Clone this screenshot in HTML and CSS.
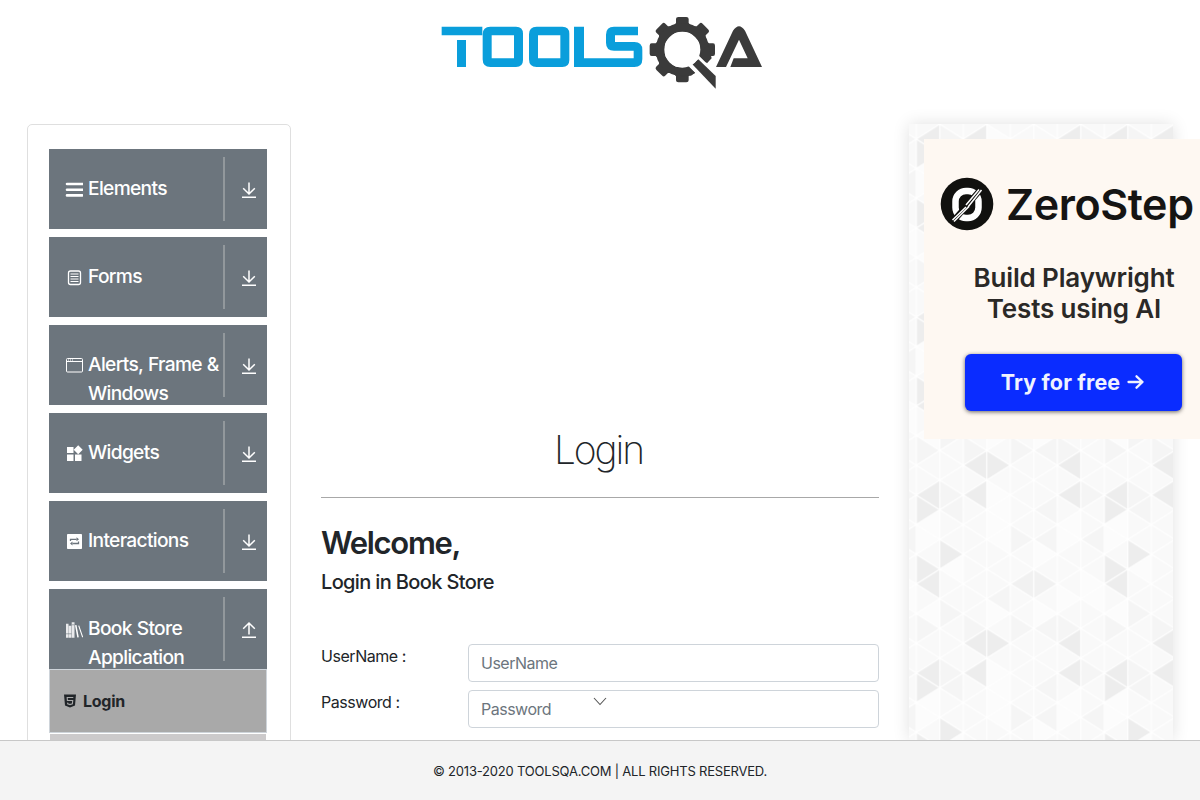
FILE: index.html
```html
<!DOCTYPE html>
<html lang="en">
<head>
<meta charset="utf-8">
<title>ToolsQA</title>
<link rel="stylesheet" href="styles.css">
</head>
<body>
<svg class="defs" width="0" height="0">
  <symbol id="down" viewBox="0 0 16 18"><path d="M8 1.500v11M2.200 7.200L8 13l5.800-5.800M1 16.200h14" fill="none" stroke="#fff" stroke-width="1.500"/></symbol>
  <symbol id="up" viewBox="0 0 16 18"><path d="M8 13.500v-11M2.200 7.800L8 2l5.800 5.800M1 16.200h14" fill="none" stroke="#fff" stroke-width="1.500"/></symbol>
</svg>
<header class="header">
  <svg class="logo" viewBox="0 0 1035 285" role="img" aria-label="ToolsQA">
    <g fill="#0a9edb" fill-rule="evenodd">
      <path d="M35 65H157V91H35ZM81 105H108V186H81Z"/>
      <path d="M181 65H258Q279 65 279 86V165Q279 186 258 186H181Q158 186 158 163V88Q158 65 181 65ZM185 91V160H252V91Z"/>
      <path d="M320 65H397Q418 65 418 86V165Q418 186 397 186H320Q297 186 297 163V88Q297 65 320 65ZM324 91V160H391V91Z"/>
      <path d="M432 65H462V160H611V137H552Q528 137 528 113V89Q528 65 552 65H624V91H555V111H613Q637 111 637 135V162Q637 186 613 186H432Z"/>
    </g>
    <g fill="#3b3b3b">
      <g>
        <path id="tooth" d="M727 66L738 54V42Q738 36 745 36H769Q776 36 776 42V54L787 66V82H727Z"/>
        <use href="#tooth" transform="rotate(45 757 134)"/>
        <use href="#tooth" transform="rotate(90 757 134)"/>
        <use href="#tooth" transform="rotate(180 757 134)"/>
        <use href="#tooth" transform="rotate(225 757 134)"/>
        <use href="#tooth" transform="rotate(270 757 134)"/>
        <use href="#tooth" transform="rotate(315 757 134)"/>
      </g>
      <circle cx="757" cy="134" r="67" fill="none" stroke="#3b3b3b" stroke-width="26"/>
      <path d="M803 148L870 215V270L765 177Z" fill="#fff"/>
      <path d="M803 148L831 175Q840 165 845 160L835 120ZM770 178L795 203L783 212H750V185Z"/>
      <path d="M787 178L805 163L857 213V251Z"/>
      <path d="M858 186L909 77Q927 50 945 77L996 186H901L911 160H953L927 104L888 186Z"/>
    </g>
    <circle cx="757" cy="134" r="54" fill="#fff"/>
  </svg>
</header>
<main class="layout">
  <nav class="sidebar">
    <div class="group"><div class="title"><svg class="icon" viewBox="0 0 18 18"><path d="M2 4h15.400M2 9.700h15.400M2 15.400h15.400" stroke="#fff" stroke-width="2.600" stroke-linecap="round"/></svg><span>Elements</span></div><div class="toggle"><svg><use href="#down"/></svg></div></div>
    <div class="group"><div class="title"><svg class="icon" viewBox="0 0 18 18"><rect x="3.500" y="3" width="12" height="13.500" rx="2" fill="none" stroke="#fff" stroke-width="1.300"/><path d="M5.500 6h8M5.500 8.500h8M5.500 11h8M5.500 13.500h8" stroke="#fff" stroke-width="1"/></svg><span>Forms</span></div><div class="toggle"><svg><use href="#down"/></svg></div></div>
    <div class="group"><div class="title"><svg class="icon" viewBox="0 0 18 18"><rect x="1.500" y="2.500" width="16" height="13.500" rx="1" fill="none" stroke="#fff"/><path d="M1.500 5.500h16M3 4h1M5 4h1M7 4h1" stroke="#fff"/></svg><span>Alerts, Frame &amp; Windows</span></div><div class="toggle"><svg><use href="#down"/></svg></div></div>
    <div class="group"><div class="title"><svg class="icon" viewBox="0 0 18 18"><path d="M2 3h6.500v6H2zM2 10.500h6.500v6.500H2zM10 10.500h6.500v6.500h-6.500zM13.200 1.200L17.700 5.700 13.200 10.200 8.700 5.700z" fill="#fff"/></svg><span>Widgets</span></div><div class="toggle"><svg><use href="#down"/></svg></div></div>
    <div class="group"><div class="title"><svg class="icon" viewBox="0 0 18 18"><rect x="2" y="2" width="15" height="15" rx=".8" fill="#fff"/><path d="M5.500 9V7.300h6M13.500 9.500v2h-6" fill="none" stroke="#6c757d" stroke-width="1.300"/><path d="M11.500 5.200L14 7.300 11.500 9.300zM7.500 9.500L5 11.500 7.500 13.600z" fill="#6c757d"/></svg><span>Interactions</span></div><div class="toggle"><svg><use href="#down"/></svg></div></div>
    <div class="group open"><div class="title"><svg class="icon" viewBox="0 0 18 18"><g transform="translate(0 .8)"><path d="M1 3h2.500v14H1zM3.800 5h2.500v12H3.800zM6.700 1.500h2.800v15.500H6.700z" fill="#fff" fill-opacity=".85"/><path d="M1 13h5.500M7 4h2.500" stroke="#6c757d" stroke-width=".6"/><path d="M10 4.500l1.500-.3 2.300 12.300-1.500.3zM13.200 5l1-.3 4 11.500-1 .4z" fill="#fff"/></g></svg><span>Book Store Application</span></div><div class="toggle"><svg><use href="#up"/></svg></div></div>
    <ul class="menu">
      <li class="active"><svg viewBox="0 0 12 14"><path d="M0 .5h12l-1 11L6 13.500l-5-2z" fill="#212529"/><path d="M9.300 3.500H3.200l.2 3h5.300l-.3 3.300L6 10.600l-2.300-.8-.1-1.200" fill="none" stroke="#a9a9a9" stroke-width="1.100"/></svg><span>Login</span></li>
      <li></li>
    </ul>
  </nav>
  <section class="content">
    <h1>Login</h1>
    <hr>
    <h2>Welcome,</h2>
    <h5>Login in Book Store</h5>
    <form class="form">
      <label for="user">UserName :</label><input id="user" placeholder="UserName">
      <label for="pass">Password :</label><input id="pass" type="password" placeholder="Password">
    </form>
  </section>
  <aside class="aside">
    <svg class="mesh" width="264" height="616">
      <defs>
        <pattern id="mesh" width="188" height="178" patternUnits="userSpaceOnUse" patternTransform="translate(7.300 -14.700)">
          <rect width="188" height="178" fill="#f9f9f9"/>
          <g transform="scale(23.500 14.833)">
            <path fill="#fcfcfc" d="M3 3L4 4 3 5zM4 2L3 3 4 4zM7 3L6 4 7 5zM6 4L7 5 6 6zM5 5L6 6 5 7zM1 3L0 4 1 5zM0 4L1 5 0 6zM3 1L4 2 3 3zM4 4L3 5 4 6zM1 9L0 10 1 11zM3 9L4 10 3 11zM7 7L8 8 7 9zM8 8L7 9 8 10zM6 8L7 9 6 10zM5 9L6 10 5 11zM2 6L1 7 2 8z"/>
            <path fill="#f5f5f5" d="M4 10L5 11 4 12zM6 10L5 11 6 12zM6 10L7 11 6 12zM2 10L3 11 2 12zM0 10L1 11 0 12zM6 4L5 5 6 6zM8 4L7 5 8 6zM4 4L5 5 4 6zM6 2L5 3 6 4zM1 1L2 2 1 3zM2 2L1 3 2 4zM7 1L8 2 7 3zM4 8L3 9 4 10zM1 9L2 10 1 11zM5 7L6 8 5 9z"/>
            <path fill="#ededed" d="M3-1L2 0 3 1zM3 11L2 12 3 13zM3-1L4 0 3 1zM3 11L4 12 3 13zM7-1L6 0 7 1zM7 11L6 12 7 13zM1 1L0 2 1 3zM0 2L1 3 0 4zM3 1L2 2 3 3zM7 1L6 2 7 3zM1 5L2 6 1 7zM0 6L1 7 0 8zM1 7L0 8 1 9z"/>
            <path fill="#f1f1f1" d="M5 7L4 8 5 9zM5 7L6 8 5 9z"/>
          </g>
          <path fill="none" stroke="#fff" stroke-width="1.200" d="M0 0V178M23.500 0V178M47 0V178M70.500 0V178M94 0V178M117.500 0V178M141 0V178M164.500 0V178M188 0V178M0 0L188 118.667M0 29.667L188 148.333M0 59.333L188 178M0 89L141 178M0 118.667L94 178M0 148.333L47 178M47 0L188 89M94 0L188 59.333M141 0L188 29.667M188 0L0 118.667M188 29.667L0 148.333M188 59.333L0 178M188 89L47 178M188 118.667L94 178M188 148.333L141 178M141 0L0 89M94 0L0 59.333M47 0L0 29.667"/>
        </pattern>
      </defs>
      <rect width="264" height="616" fill="url(#mesh)"/>
    </svg>
    <div class="ad">
      <div class="brand">
        <svg viewBox="0 0 54 54"><circle cx="27" cy="27" r="26.300" fill="#11110f"/><rect x="15.500" y="14" width="23" height="27" rx="10.500" fill="none" stroke="#fff" stroke-width="6.500"/><path d="M13 44.500L41 12" stroke="#11110f" stroke-width="6"/><path d="M12.500 43L26 30M26 28L39 12.500M14 44.500L29 29.500M28 30L41.500 13" stroke="#fff" stroke-width="1.500"/></svg>
        <span>ZeroStep</span>
      </div>
      <p>Build Playwright<br>Tests using AI</p>
      <div class="cta"><span>Try for free</span><svg viewBox="0 0 18 16"><path d="M1.500 8h14M9.500 2.300L15.500 8l-6 5.700" fill="none" stroke="#f0f2ff" stroke-width="2.300" stroke-linecap="round" stroke-linejoin="round"/></svg></div>
    </div>
  </aside>
</main>
<svg class="chevron" viewBox="0 0 14 9"><path d="M1 1l6 6.500L13 1" fill="none" stroke="#555" stroke-width="1.100"/></svg>
<footer class="footer"><span>© 2013-2020 TOOLSQA.COM | ALL RIGHTS RESERVED.</span></footer>
</body>
</html>
```
FILE: styles.css
```css
* { box-sizing: border-box; }
body { margin: 0; height: 800px; overflow: hidden; display: flex; flex-direction: column; background: #fff; color: #212529; font: 400 16px/1.5 Inter, "Liberation Sans", sans-serif; }
.defs { position: absolute; }
.header { flex: none; height: 124px; padding: 5px 0 0 430px; }
.logo { display: block; width: 345px; height: 95px; }
.layout { flex: none; height: 616px; overflow: hidden; overflow: clip; overflow-clip-margin: 30px; display: flex; padding-left: 27px; }
.sidebar { flex: none; width: 264px; height: 900px; padding: 24px 23px 0 21px; border: 1px solid #dfdfdf; border-radius: 5px; }
.group { display: flex; height: 80px; margin-bottom: 8px; overflow: hidden; background: #6c757d; color: #fff; }
.group.open { margin-bottom: 0; }
.title { display: flex; flex: none; width: 176px; margin: 8px 0; padding: 17px 0 0 16px; border-right: 2px solid #92989c; font-size: 19.2px; font-weight: 450; line-height: 29px; height: 64px; }
.title span { margin-right: -6px; letter-spacing: -.68px; word-spacing: .5px; }
.icon { flex: none; width: 18px; height: 18px; margin: 6px 5px 0 0; }
.toggle { flex: 1; padding: 32px 0 0 16px; }
.toggle svg { display: block; width: 16px; height: 18px; }
.menu { list-style: none; margin: 0; padding: 0; }
.menu li { height: 64px; margin-bottom: 1px; padding: 19px 14px; display: flex; gap: 7px; background: #cccacb; border: solid #fff; border-width: 0 1px; }
.menu .active { background: #a9a9a9; border: 1px solid #ced4da; font-weight: 700; }
.menu svg { width: 12px; height: 14px; margin-top: 5px; }
.menu span { letter-spacing: -.25px; }
.content { width: 558px; flex: none; margin-left: 30px; padding-top: 302px; }
h1 { margin: 0; padding-right: 3px; text-align: center; font-size: 39px; line-height: 47px; font-weight: 220; letter-spacing: -2.100px; }
hr { margin: 24px 0 26px; border: 0; border-top: 1px solid #a8a8a8; }
h2 { margin: 0 0 8px; font-size: 31px; line-height: 38px; font-weight: 600; letter-spacing: -1.300px; }
h5 { margin: 0; font-size: 20px; line-height: 24px; font-weight: 550; letter-spacing: -.64px; }
.form { display: grid; grid-template-columns: 147px 411px; row-gap: 8px; margin-top: 49.5px; }
label { line-height: 24px; letter-spacing: -.45px; }
input { width: 411px; height: 38px; padding: 6px 12px; border: 1px solid #ced4da; border-radius: 4px; font: inherit; letter-spacing: -.5px; }
input::placeholder { color: #6c757d; opacity: 1; }
.aside { flex: none; position: relative; width: 264px; margin-left: 30px; height: 616px; box-shadow: 0 0 16px rgba(0,0,0,.12); }
.mesh { display: block; }
.ad { position: absolute; left: 15px; top: 15px; width: 300px; height: 300px; padding: 38px 0 0 16px; background: #fef8f2; color: #2b2927; }
.brand { display: flex; align-items: center; height: 54px; gap: 12px; color: #151413; font-size: 43px; font-weight: 600; letter-spacing: -.4px; }
.brand svg { width: 54px; height: 54px; flex: none; }
.ad p { width: 268px; margin: 31px 0 0; text-align: center; font-size: 26px; line-height: 31px; font-weight: 600; letter-spacing: -.15px; }
.cta { width: 217px; height: 57px; margin: 30px 0 0 25px; display: flex; align-items: center; justify-content: center; gap: 7px; border-radius: 6px; background: #0a2cff; box-shadow: 0 1px 4px rgba(0,0,0,.6); color: #f0f2ff; font-size: 21.500px; font-weight: 700; letter-spacing: .15px; line-height: 30px; padding: 0 1px 2px 0; }
.cta svg { width: 18px; height: 16px; }
.chevron { position: absolute; left: 593px; top: 697px; width: 14px; height: 9px; }
.footer { position: relative; height: 60px; flex: none; display: flex; align-items: center; justify-content: center; background: #f4f4f4; border-top: 1px solid #c8c8c8; font-size: 13px; letter-spacing: -.2px; padding-top: 2px; }
```
